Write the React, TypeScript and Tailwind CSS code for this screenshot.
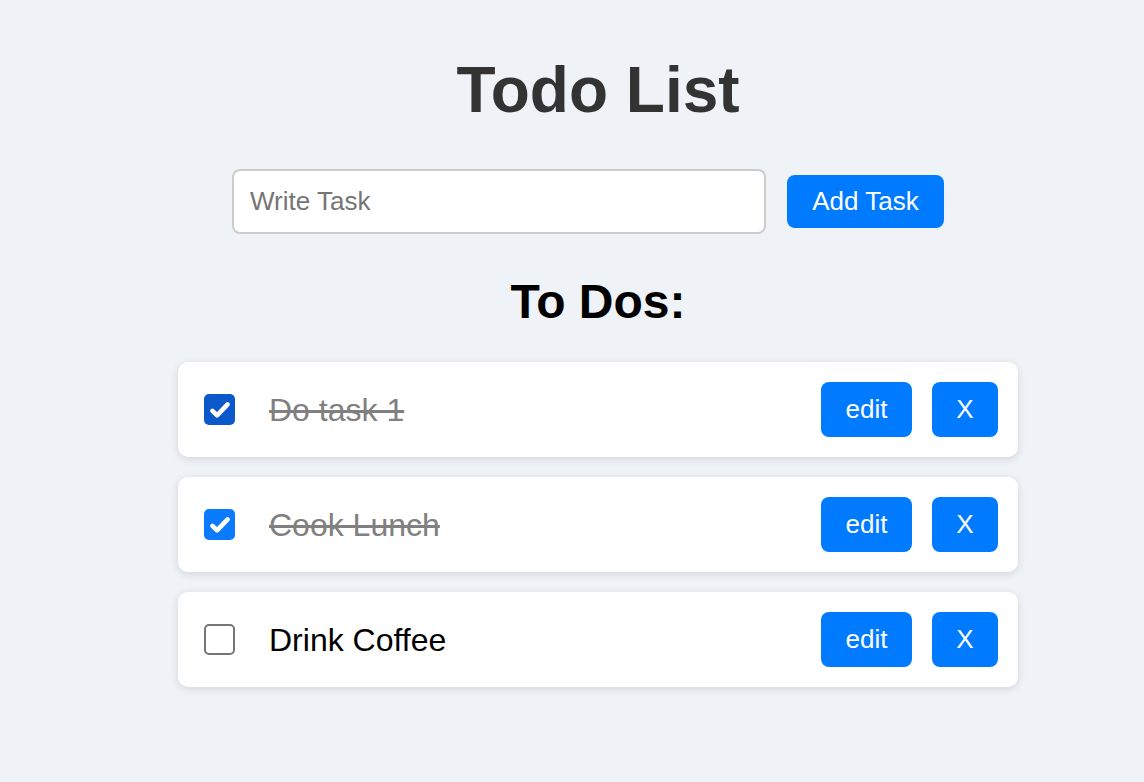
import { useState } from "react";

interface Todo {
  id: number;
  text: string;
  done: boolean;
}

const FONT = "font-['Liberation_Sans','Helvetica','Arial',sans-serif]";

function CheckBox({ checked, dark }: { checked: boolean; dark?: boolean }) {
  if (!checked) {
    return (
      <span className="block h-[31px] w-[31px] shrink-0 rounded-[5px] border-2 border-[#767676] bg-white" />
    );
  }
  return (
    <span
      className={`flex h-[31px] w-[31px] shrink-0 items-center justify-center rounded-[5px] ${
        dark ? "bg-[#0a58ca]" : "bg-[#0a7aff]"
      }`}
    >
      <svg width="26" height="26" viewBox="0 0 24 24" fill="none">
        <path
          d="M5 12.8l4.3 4.2L19 6.8"
          stroke="white"
          strokeWidth="4.2"
          strokeLinecap="round"
          strokeLinejoin="round"
        />
      </svg>
    </span>
  );
}

export default function App() {
  const [todos] = useState<Todo[]>([
    { id: 1, text: "Do task 1", done: true },
    { id: 2, text: "Cook Lunch", done: true },
    { id: 3, text: "Drink Coffee", done: false },
  ]);

  return (
    <div className={`min-h-[782px] w-full bg-[#eff2f7] ${FONT}`}>
      <div className="ml-[178px] flex w-[840px] flex-col pt-[54px]">
        <h1 className="text-center text-[64px] leading-[72px] font-bold text-[#333333]">
          Todo List
        </h1>

        <div className="mt-[43px] flex items-center justify-center pr-[20px]">
          <input
            placeholder="Write Task"
            className="h-[65px] w-[534px] rounded-[8px] border-2 border-[#cccccc] bg-white px-[16px] text-[26px] text-black outline-none placeholder:text-[#757575]"
          />
          <button className="ml-[21px] h-[53px] w-[157px] rounded-[8px] bg-[#007bff] text-[26px] text-white">
            Add Task
          </button>
        </div>

        <h2 className="mt-[41px] text-center text-[48px] leading-[54px] font-bold text-black">
          To Dos:
        </h2>

        <ul className="mt-[33px] flex flex-col gap-[20px]">
          {todos.map((t, i) => (
            <li
              key={t.id}
              className="flex h-[95px] items-center rounded-[10px] bg-white pr-[20px] pl-[26px] shadow-[0_2px_8px_rgba(0,0,0,0.12)]"
            >
              <CheckBox checked={t.done} dark={i === 0} />
              <span
                className={`ml-[34px] flex-1 text-[32px] leading-[40px] ${
                  t.done ? "text-[#808080] line-through" : "text-black"
                }`}
              >
                {t.text}
              </span>
              <button className="h-[55px] w-[91px] rounded-[8px] bg-[#007bff] text-[26px] text-white">
                edit
              </button>
              <button className="ml-[20px] h-[55px] w-[66px] rounded-[8px] bg-[#007bff] text-[26px] text-white">
                X
              </button>
            </li>
          ))}
        </ul>
      </div>
    </div>
  );
}
